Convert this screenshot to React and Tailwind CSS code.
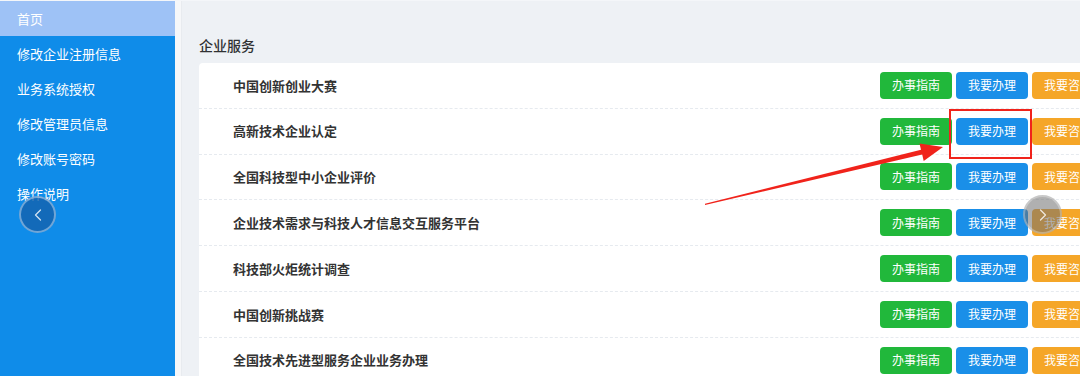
import { ChevronLeft, ChevronRight } from 'lucide-react';

const menu = ['首页', '修改企业注册信息', '业务系统授权', '修改管理员信息', '修改账号密码', '操作说明'];

const services = [
  '中国创新创业大赛',
  '高新技术企业认定',
  '全国科技型中小企业评价',
  '企业技术需求与科技人才信息交互服务平台',
  '科技部火炬统计调查',
  '中国创新挑战赛',
  '全国技术先进型服务企业业务办理',
];

export default function App() {
  return (
    <div
      className="relative w-[1080px] h-[376px] overflow-hidden flex bg-white border-t border-[#f4f6f9]"
      style={{ fontFamily: '"Noto Sans CJK SC", "Noto Sans", sans-serif' }}
    >
      <aside className="w-[175px] shrink-0 bg-[#0f8ce9]">
        {menu.map((item, i) => (
          <div
            key={item}
            className={`h-[35px] flex items-center pl-[17px] text-[13px] text-white ${
              i === 0 ? 'bg-[#9ec2f6]' : ''
            }`}
          >
            {item}
          </div>
        ))}
      </aside>

      <div className="w-[7px] shrink-0 bg-[#f6f7f9] border-r border-[#e8ebef]" />

      <main className="flex-1 bg-[#eef1f5] pl-[17px] pt-[34px] overflow-hidden">
        <h2 className="text-[14px] leading-[20px] font-medium text-[#303133] mb-[8px]">企业服务</h2>
        <div className="w-[925px] bg-white rounded-tl-[4px]">
          {services.map((name) => (
            <div
              key={name}
              className="h-[45.8px] flex items-center justify-between pl-[34px] pr-[20px] border-b border-dashed border-[#e6eaef]"
            >
              <span className="text-[13px] font-semibold text-[#333]">{name}</span>
              <div className="flex gap-[4px]">
                <button className="w-[72px] h-[27px] rounded-[4px] bg-[#21b83b] text-white text-[12px]">
                  办事指南
                </button>
                <button className="w-[72px] h-[27px] rounded-[4px] bg-[#1a8fe8] text-white text-[12px]">
                  我要办理
                </button>
                <button className="w-[72px] h-[27px] rounded-[4px] bg-[#f5a628] text-white text-[12px]">
                  我要咨询
                </button>
              </div>
            </div>
          ))}
        </div>
      </main>

      {/* carousel arrows */}
      <div className="absolute left-[19px] top-[195px] w-[37px] h-[37px] rounded-full bg-[#1462ad]/80 border-2 border-white/40 flex items-center justify-center">
        <ChevronLeft size={20} strokeWidth={1.5} className="text-white/80" />
      </div>
      <div className="absolute left-[1023px] top-[194px] w-[39px] h-[39px] rounded-full bg-[#6f6f6f]/55 border-2 border-white/30 flex items-center justify-center">
        <ChevronRight size={20} strokeWidth={1.5} className="text-white/80" />
      </div>

      {/* annotation */}
      <div className="absolute left-[949px] top-[108px] w-[83px] h-[50px] border-2 border-[#f0231b]" />
      <svg className="absolute left-0 top-0 pointer-events-none" width="1080" height="376">
        <polygon
          points="705,202.8 921,148.7 919.5,142.4 943,146 923.7,159.9 922.2,153.5 705,204"
          fill="#f0231b"
        />
      </svg>
    </div>
  );
}
